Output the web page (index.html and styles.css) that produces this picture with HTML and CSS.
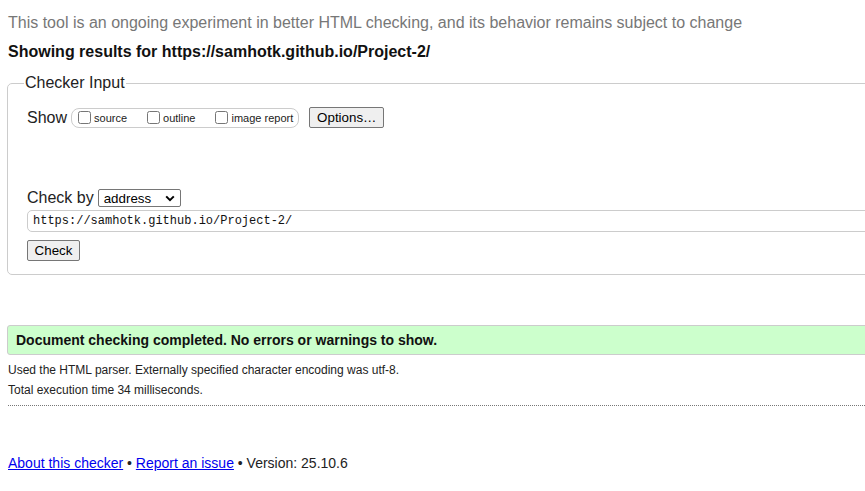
FILE: index.html
```html
<!DOCTYPE html>
<html lang="en">
<head>
<meta charset="utf-8">
<title>Nu Html Checker</title>
<link rel="stylesheet" href="styles.css">
</head>
<body>
<div class="page">
  <p class="intro">This tool is an ongoing experiment in better HTML checking, and its behavior remains subject to change</p>
  <h2 class="results">Showing results for https://samhotk.github.io/Project-2/</h2>
  <form class="checker">
    <fieldset class="input-set">
      <legend class="legend">Checker Input</legend>
      <div class="show-row">
        <span class="label">Show</span>
        <span class="group">
          <label class="opt"><input type="checkbox" class="cb"><span>source</span></label>
          <label class="opt"><input type="checkbox" class="cb"><span>outline</span></label>
          <label class="opt last"><input type="checkbox" class="cb"><span>image report</span></label>
        </span>
        <button type="button" class="btn options">Options…</button>
      </div>
      <div class="checkby-row">
        <span class="label">Check by</span>
        <span class="select">
          <span class="select-text">address</span>
          <svg class="chev" width="10" height="7" viewBox="0 0 10 7"><path d="M1.2 1.4 L5 5.2 L8.8 1.4" fill="none" stroke="#000" stroke-width="2"/></svg>
        </span>
      </div>
      <div class="url-row">
        <input class="url" type="text" value="https://samhotk.github.io/Project-2/">
      </div>
      <div class="submit-row">
        <button type="button" class="btn check">Check</button>
      </div>
    </fieldset>
  </form>
  <div class="success">Document checking completed. No errors or warnings to show.</div>
  <p class="details first">Used the HTML parser. Externally specified character encoding was utf-8.</p>
  <p class="details">Total execution time 34 milliseconds.</p>
  <hr class="sep">
  <p class="footer"><a href="#">About this checker</a> • <a href="#">Report an issue</a> • Version: 25.10.6</p>
</div>
</body>
</html>
```
FILE: styles.css
```css
html {
  overflow: hidden;
}
body {
  margin: 0;
  font-family: "Liberation Sans", Arial, sans-serif;
  font-size: 16px;
  color: #222;
  background: #fff;
}
.page {
  width: 1000px;
  padding: 14px 0 0 7px;
}
.intro {
  margin: 0 0 0 1px;
  line-height: 18px;
  color: #777;
}
.results {
  margin: 11px 0 0 1px;
  font-size: 16px;
  line-height: 18px;
  font-weight: bold;
  color: #111;
}
.checker {
  margin: 13px 0 0;
}
.input-set {
  margin: 0;
  padding: 0 19px 13px;
  border: 1px solid #ccc;
  border-radius: 5px;
  min-width: 0;
}
.legend {
  padding: 0 1px;
  margin-left: -3px;
  line-height: 18px;
  color: #222;
}
.label {
  line-height: 18px;
}
.show-row {
  display: flex;
  align-items: center;
  height: 21px;
  margin-top: 15px;
}
.group {
  display: flex;
  align-items: center;
  height: 18px;
  margin-left: 4px;
  padding: 0 5px 0 2px;
  border: 1px solid #ccc;
  border-radius: 8px;
  font-size: 11px;
}
.opt {
  display: flex;
  align-items: center;
  margin-right: 16px;
}
.opt.last {
  margin-right: 0;
}
.cb {
  width: 13px;
  height: 13px;
  margin: 0 3px 0 4px;
}
.btn {
  font-family: "Liberation Sans", Arial, sans-serif;
  font-size: 13.33px;
  color: #000;
  background: #efefef;
  border: 1px solid #767676;
  border-radius: 2px;
  padding: 1px 6px;
  height: 21px;
  line-height: 17px;
}
.options {
  margin-left: 10px;
  width: 75px;
}
.checkby-row {
  display: flex;
  align-items: center;
  height: 18px;
  margin-top: 61px;
}
.select {
  display: flex;
  align-items: center;
  justify-content: space-between;
  box-sizing: border-box;
  width: 83px;
  height: 18px;
  margin-left: 4px;
  padding: 0 5px 0 5px;
  border: 1px solid #767676;
  border-radius: 2px;
  font-size: 13.33px;
  color: #000;
}
.chev {
  display: block;
}
.url-row {
  margin-top: 3px;
}
.url {
  box-sizing: border-box;
  display: block;
  width: 100%;
  height: 22px;
  margin: 0;
  padding: 0 5px;
  border: 1px solid #ccc;
  border-radius: 5px;
  font-family: "Liberation Mono", "DejaVu Sans Mono", monospace;
  font-size: 12px;
  color: #111;
  outline: none;
}
.submit-row {
  margin-top: 8px;
  display: flex;
}
.check {
  width: 53px;
}
.success {
  margin-top: 50px;
  height: 28px;
  line-height: 28px;
  padding: 0 8px;
  background: #ccffcc;
  border: 1px solid #ccc;
  border-radius: 3px;
  font-size: 14px;
  font-weight: bold;
  color: #111;
}
.details {
  margin: 0 0 0 1px;
  font-size: 12px;
  line-height: 20px;
  color: #222;
}
.details.first {
  margin-top: 5px;
}
.sep {
  margin: 5px 0 0 1px;
  border: 0;
  border-top: 1px dotted #777;
  height: 0;
}
.footer {
  margin: 49px 0 0 1px;
  font-size: 14px;
  line-height: 16px;
  color: #222;
}
.footer a {
  color: #00e;
}
```
